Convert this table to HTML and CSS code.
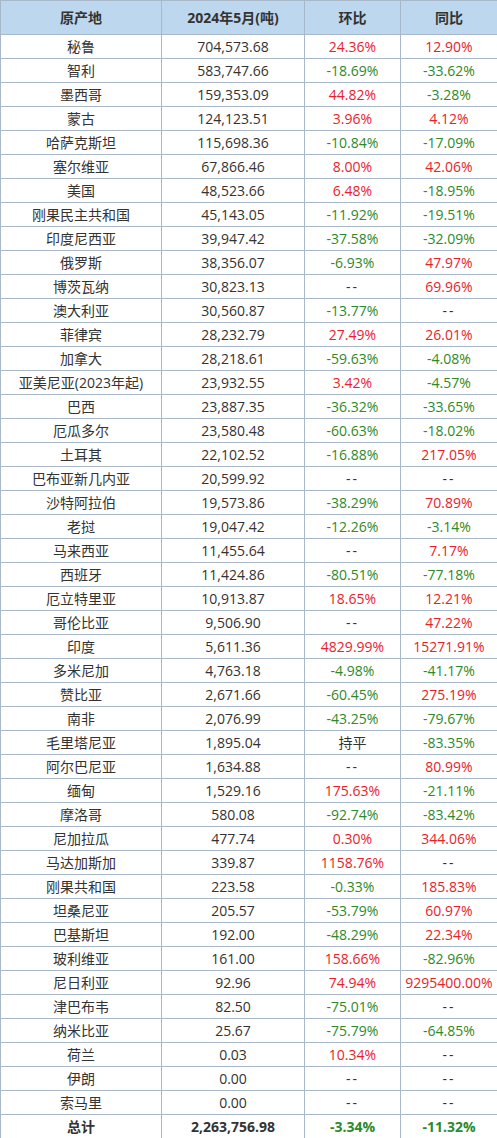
FILE: index.html
```html
<!DOCTYPE html>
<html lang="zh-CN">
<head>
    <meta charset="UTF-8">
    <title>2024年5月 原产地进口量</title>
    <link rel="stylesheet" href="styles.css">
</head>
<body>
    <table class="data-table">
        <colgroup>
            <col class="col-origin">
            <col class="col-amount">
            <col class="col-mom">
            <col class="col-yoy">
        </colgroup>
        <thead>
            <tr>
                <th>原产地</th>
                <th>2024年5月(吨)</th>
                <th>环比</th>
                <th>同比</th>
            </tr>
        </thead>
        <tbody>
            <tr><td>秘鲁</td><td>704,573.68</td><td class="up">24.36%</td><td class="up">12.90%</td></tr>
            <tr><td>智利</td><td>583,747.66</td><td class="down">-18.69%</td><td class="down">-33.62%</td></tr>
            <tr><td>墨西哥</td><td>159,353.09</td><td class="up">44.82%</td><td class="down">-3.28%</td></tr>
            <tr><td>蒙古</td><td>124,123.51</td><td class="up">3.96%</td><td class="up">4.12%</td></tr>
            <tr><td>哈萨克斯坦</td><td>115,698.36</td><td class="down">-10.84%</td><td class="down">-17.09%</td></tr>
            <tr><td>塞尔维亚</td><td>67,866.46</td><td class="up">8.00%</td><td class="up">42.06%</td></tr>
            <tr><td>美国</td><td>48,523.66</td><td class="up">6.48%</td><td class="down">-18.95%</td></tr>
            <tr><td>刚果民主共和国</td><td>45,143.05</td><td class="down">-11.92%</td><td class="down">-19.51%</td></tr>
            <tr><td>印度尼西亚</td><td>39,947.42</td><td class="down">-37.58%</td><td class="down">-32.09%</td></tr>
            <tr><td>俄罗斯</td><td>38,356.07</td><td class="down">-6.93%</td><td class="up">47.97%</td></tr>
            <tr><td>博茨瓦纳</td><td>30,823.13</td><td class="none">--</td><td class="up">69.96%</td></tr>
            <tr><td>澳大利亚</td><td>30,560.87</td><td class="down">-13.77%</td><td class="none">--</td></tr>
            <tr><td>菲律宾</td><td>28,232.79</td><td class="up">27.49%</td><td class="up">26.01%</td></tr>
            <tr><td>加拿大</td><td>28,218.61</td><td class="down">-59.63%</td><td class="down">-4.08%</td></tr>
            <tr><td>亚美尼亚(2023年起)</td><td>23,932.55</td><td class="up">3.42%</td><td class="down">-4.57%</td></tr>
            <tr><td>巴西</td><td>23,887.35</td><td class="down">-36.32%</td><td class="down">-33.65%</td></tr>
            <tr><td>厄瓜多尔</td><td>23,580.48</td><td class="down">-60.63%</td><td class="down">-18.02%</td></tr>
            <tr><td>土耳其</td><td>22,102.52</td><td class="down">-16.88%</td><td class="up">217.05%</td></tr>
            <tr><td>巴布亚新几内亚</td><td>20,599.92</td><td class="none">--</td><td class="none">--</td></tr>
            <tr><td>沙特阿拉伯</td><td>19,573.86</td><td class="down">-38.29%</td><td class="up">70.89%</td></tr>
            <tr><td>老挝</td><td>19,047.42</td><td class="down">-12.26%</td><td class="down">-3.14%</td></tr>
            <tr><td>马来西亚</td><td>11,455.64</td><td class="none">--</td><td class="up">7.17%</td></tr>
            <tr><td>西班牙</td><td>11,424.86</td><td class="down">-80.51%</td><td class="down">-77.18%</td></tr>
            <tr><td>厄立特里亚</td><td>10,913.87</td><td class="up">18.65%</td><td class="up">12.21%</td></tr>
            <tr><td>哥伦比亚</td><td>9,506.90</td><td class="none">--</td><td class="up">47.22%</td></tr>
            <tr><td>印度</td><td>5,611.36</td><td class="up">4829.99%</td><td class="up">15271.91%</td></tr>
            <tr><td>多米尼加</td><td>4,763.18</td><td class="down">-4.98%</td><td class="down">-41.17%</td></tr>
            <tr><td>赞比亚</td><td>2,671.66</td><td class="down">-60.45%</td><td class="up">275.19%</td></tr>
            <tr><td>南非</td><td>2,076.99</td><td class="down">-43.25%</td><td class="down">-79.67%</td></tr>
            <tr><td>毛里塔尼亚</td><td>1,895.04</td><td>持平</td><td class="down">-83.35%</td></tr>
            <tr><td>阿尔巴尼亚</td><td>1,634.88</td><td class="none">--</td><td class="up">80.99%</td></tr>
            <tr><td>缅甸</td><td>1,529.16</td><td class="up">175.63%</td><td class="down">-21.11%</td></tr>
            <tr><td>摩洛哥</td><td>580.08</td><td class="down">-92.74%</td><td class="down">-83.42%</td></tr>
            <tr><td>尼加拉瓜</td><td>477.74</td><td class="up">0.30%</td><td class="up">344.06%</td></tr>
            <tr><td>马达加斯加</td><td>339.87</td><td class="up">1158.76%</td><td class="none">--</td></tr>
            <tr><td>刚果共和国</td><td>223.58</td><td class="down">-0.33%</td><td class="up">185.83%</td></tr>
            <tr><td>坦桑尼亚</td><td>205.57</td><td class="down">-53.79%</td><td class="up">60.97%</td></tr>
            <tr><td>巴基斯坦</td><td>192.00</td><td class="down">-48.29%</td><td class="up">22.34%</td></tr>
            <tr><td>玻利维亚</td><td>161.00</td><td class="up">158.66%</td><td class="down">-82.96%</td></tr>
            <tr><td>尼日利亚</td><td>92.96</td><td class="up">74.94%</td><td class="up">9295400.00%</td></tr>
            <tr><td>津巴布韦</td><td>82.50</td><td class="down">-75.01%</td><td class="none">--</td></tr>
            <tr><td>纳米比亚</td><td>25.67</td><td class="down">-75.79%</td><td class="down">-64.85%</td></tr>
            <tr><td>荷兰</td><td>0.03</td><td class="up">10.34%</td><td class="none">--</td></tr>
            <tr><td>伊朗</td><td>0.00</td><td class="none">--</td><td class="none">--</td></tr>
            <tr><td>索马里</td><td>0.00</td><td class="none">--</td><td class="none">--</td></tr>
        </tbody>
        <tfoot>
            <tr><td>总计</td><td>2,263,756.98</td><td class="down">-3.34%</td><td class="down">-11.32%</td></tr>
        </tfoot>
    </table>
</body>
</html>
```

FILE: styles.css
```css
* {
    box-sizing: border-box;
    margin: 0;
    padding: 0;
}

body {
    background: #ffffff;
    font-family: 'Open Sans', 'Noto Sans CJK SC', sans-serif;
    font-size: 14px;
    color: #333333;
}

.data-table {
    width: 497px;
    border-collapse: collapse;
    table-layout: fixed;
}

.col-origin { width: 161px; }
.col-amount { width: 143px; }
.col-mom { width: 96px; }
.col-yoy { width: 97px; }

.data-table th,
.data-table td {
    border: 1px solid #a9b8c8;
    text-align: center;
    white-space: nowrap;
    overflow: hidden;
    line-height: 22px;
    height: 24px;
    padding: 0 2px;
}

.data-table th {
    background: #bdd7ee;
    font-weight: 700;
    height: 34px;
}

.data-table tfoot td {
    font-weight: 700;
}

.none {
    letter-spacing: 2px;
}

.up {
    color: #e8222b;
}

.down {
    color: #2b8a2b;
}
```
